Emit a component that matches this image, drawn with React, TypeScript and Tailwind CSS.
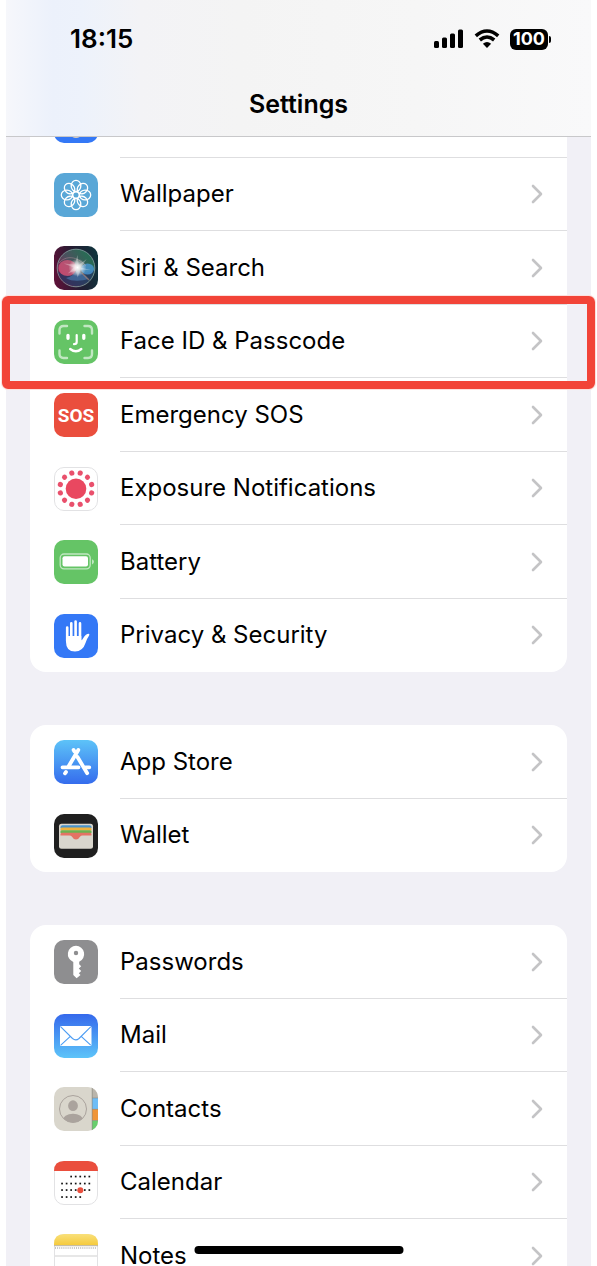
import type { ReactNode } from "react";

interface IRow {
  label: string;
  icon: ReactNode;
  highlighted?: boolean;
}

function Tile({ fill, outlined, children }: { fill: string; outlined?: boolean; children?: ReactNode }) {
  return (
    <svg viewBox="0 0 44 44" className="size-11 shrink-0" aria-hidden="true">
      <rect width="44" height="44" rx="10" fill={fill} />
      {outlined && (
        <rect x="0.5" y="0.5" width="43" height="43" rx="9.5" fill="none" stroke="#e2e2e4" />
      )}
      {children}
    </svg>
  );
}

function WallpaperIcon() {
  return (
    <Tile fill="#59a7d7">
      <g fill="none" stroke="#fff" strokeWidth="1.3">
        {[0, 45, 90, 135, 180, 225, 270, 315].map((angle) => (
          <ellipse key={angle} cx="22" cy="12.9" rx="4.8" ry="5.6" transform={`rotate(${angle} 22 22)`} />
        ))}
        <circle cx="22" cy="22" r="3.2" />
      </g>
    </Tile>
  );
}

function SiriIcon() {
  return (
    <Tile fill="url(#siri-bg)">
      <defs>
        <linearGradient id="siri-bg" x1="0" y1="0.6" x2="1" y2="0.4">
          <stop offset="0" stopColor="#5c1238" />
          <stop offset="0.5" stopColor="#231c32" />
          <stop offset="1" stopColor="#10333c" />
        </linearGradient>
        <linearGradient id="siri-orb" x1="0.1" y1="0.7" x2="0.8" y2="0.2">
          <stop offset="0" stopColor="#7d2350" />
          <stop offset="0.45" stopColor="#4d4f5e" />
          <stop offset="1" stopColor="#2a6a55" />
        </linearGradient>
        <radialGradient id="siri-glow">
          <stop offset="0" stopColor="#fff" />
          <stop offset="0.3" stopColor="#fff" stopOpacity="0.8" />
          <stop offset="1" stopColor="#fff" stopOpacity="0" />
        </radialGradient>
      </defs>
      <circle cx="22" cy="22" r="18.8" fill="url(#siri-orb)" stroke="#86a3a2" strokeOpacity="0.8" />
      <path d="M4 25c6 7 18 5 36-1-1 9-8 16-18 16S5 33 4 25Z" fill="#1f3560" opacity="0.75" />
      <ellipse cx="13.500" cy="22" rx="9" ry="8" fill="#e0587c" opacity="0.7" />
      <ellipse cx="33.500" cy="23" rx="6.500" ry="5.500" fill="#4c9ddd" opacity="0.75" />
      <path d="M23 24c4 3 8 5 11 9-6 2-16 3-22-1 5-1 8-4 11-8Z" fill="#4d80b8" opacity="0.6" />
      <path d="M28 27l7 7" stroke="#b98a74" strokeOpacity="0.6" strokeWidth="1.5" />
      <path d="M5 17c7-8 18-7 27 3" fill="none" stroke="#c99aa4" strokeOpacity="0.4" />
      <path d="M23.500 9l1.200 10 8-6-6 8.500 10 2.500-10-.5-3 8-2-7-8 3 6-6-10-4 11 1Z" fill="#fff" opacity="0.3" />
      <circle cx="23.500" cy="21.500" r="9" fill="url(#siri-glow)" />
    </Tile>
  );
}

function FaceIdIcon() {
  return (
    <Tile fill="#65c466">
      <g fill="none" stroke="#fff" strokeLinecap="round">
        <path
          d="M5.5 13.5V10Q5.500 6 9.500 6H13M30.500 6H34Q38 6 38 10V13.500M38 30.500V34Q38 38 34 38H30.500M13 38H9.500Q5.500 38 5.500 34V30.500"
          strokeWidth="2.4"
          opacity="0.6"
        />
        <path d="M14 15.300V18.300M29.800 15.300V18.300" strokeWidth="3.3" />
        <path d="M22.700 15V22Q22.700 24.200 20 24.200" strokeWidth="2.2" />
        <path d="M16.200 29Q22 33.500 27.300 29" strokeWidth="2.4" />
      </g>
    </Tile>
  );
}

function SosIcon() {
  return (
    <Tile fill="#ea4e3d">
      <text
        x="22"
        y="29"
        textAnchor="middle"
        fill="#fff"
        className="font-['Roboto',sans-serif] text-[19px] font-bold"
      >
        SOS
      </text>
    </Tile>
  );
}

function ExposureIcon() {
  return (
    <Tile fill="#fff" outlined>
      <g fill="#e9506c">
        <circle cx="22" cy="21.700" r="10.300" fill="#e94860" />
        {Array.from({ length: 12 }, (_, i) => (
          <circle key={i} cx="22" cy="5.500" r="2.600" transform={`rotate(${i * 30 + 15} 22 21.700)`} />
        ))}
      </g>
    </Tile>
  );
}

function BatteryIcon() {
  return (
    <Tile fill="#65c466">
      <rect x="6.200" y="14" width="30" height="14.800" rx="3.800" fill="none" stroke="#fff" strokeWidth="1.300" opacity="0.6" />
      <rect x="8.500" y="16.300" width="25.500" height="10.300" rx="2" fill="#fff" />
      <path d="M38 19.200Q40 20 40 21.800T38 24.400Z" fill="#fff" opacity="0.6" />
    </Tile>
  );
}

function PrivacyIcon() {
  return (
    <Tile fill="#3478f6">
      <path d="M13.200 13.500V27M17.300 9.200V26M21.600 7.500V26M26 9.400V26" stroke="#fff" strokeWidth="2.600" strokeLinecap="round" />
      <path
        d="M12 22H27.300V26.200Q28.200 26.200 29 24.500Q31.500 19.800 34.800 19.800Q36 20.300 35 21.800Q33 24.500 31.500 29Q28.800 37.500 21 37.500Q12 37.500 12 28Z"
        fill="#fff"
      />
    </Tile>
  );
}

function AppStoreIcon() {
  return (
    <Tile fill="url(#store-bg)">
      <defs>
        <linearGradient id="store-bg" x1="0" y1="0" x2="0" y2="1">
          <stop offset="0" stopColor="#5dc3f8" />
          <stop offset="1" stopColor="#356ced" />
        </linearGradient>
      </defs>
      <g stroke="#fff" strokeWidth="3.800" strokeLinecap="round">
        <path d="M24.300 10L14.200 27M8.500 27.300H24.500M31.500 27.300H35.300M12 32L11 33.300" />
        <path d="M19.600 10L20.500 11.500M23.500 17L33.200 33.200" />
      </g>
    </Tile>
  );
}

function WalletIcon() {
  return (
    <Tile fill="#1f1f1f">
      <rect x="5" y="9.700" width="34" height="25" rx="2.500" fill="#d9d6cd" />
      <path d="M6.500 14V13Q6.500 11.200 8.500 11.200H35.500Q37.500 11.200 37.500 13V14Z" fill="#4a93c9" />
      <path d="M6.500 16.500V15Q6.500 13.600 8.500 13.600H35.500Q37.500 13.600 37.500 15V16.500Z" fill="#f0b13c" />
      <path d="M6.500 19V17.500Q6.500 16.200 8.500 16.200H35.500Q37.500 16.200 37.500 17.500V19Z" fill="#6cb250" />
      <path
        d="M6.500 21.500V20Q6.500 18.700 8.500 18.700H35.500Q37.500 18.700 37.500 20V21.500H28.500Q27 21.500 26.200 22.600Q24.800 25.400 22 25.400T17.800 22.600Q17 21.500 15.500 21.500Z"
        fill="#e47364"
      />
    </Tile>
  );
}

function PasswordsIcon() {
  return (
    <Tile fill="#8e8e90">
      <path
        fillRule="evenodd"
        d="M22 5.800A8.300 8.300 0 0 1 25.200 21.700V24.200L27.200 26.200L24.800 28.500L27.200 31L24.800 33.200L26.500 35L22.600 38.200L19.300 35V21.900A8.300 8.300 0 0 1 22 5.800ZM22 10.800A2.200 2.200 0 1 0 22 15.200A2.200 2.200 0 1 0 22 10.800Z"
        fill="#fff"
      />
    </Tile>
  );
}

function MailIcon() {
  return (
    <Tile fill="url(#mail-bg)">
      <defs>
        <linearGradient id="mail-bg" x1="0" y1="0" x2="0" y2="1">
          <stop offset="0" stopColor="#3569ec" />
          <stop offset="1" stopColor="#5dc4f9" />
        </linearGradient>
      </defs>
      <rect x="6" y="12" width="31.500" height="20" rx="1.500" fill="#fff" />
      <path
        d="M6.800 12.800L18.500 24.500Q21.800 27.200 25 24.500L36.700 12.800M6.800 31.200L16.300 22.300M36.700 31.200L27.200 22.300"
        fill="none"
        stroke="#4b9cf3"
        strokeWidth="1.100"
      />
    </Tile>
  );
}

function ContactsIcon() {
  return (
    <Tile fill="#d9d6cc">
      <defs>
        <clipPath id="contacts-tile">
          <rect width="44" height="44" rx="10" />
        </clipPath>
        <clipPath id="contacts-avatar">
          <circle cx="19" cy="22" r="13.500" />
        </clipPath>
      </defs>
      <g clipPath="url(#contacts-tile)">
        <rect x="38" width="6" height="11" fill="#bab5ab" />
        <rect x="38" y="11" width="6" height="11" fill="#6ebdf6" />
        <rect x="38" y="22" width="6" height="11.500" fill="#ef9538" />
        <rect x="38" y="33.500" width="6" height="11" fill="#68ce6d" />
        <path d="M38.200 0V44" stroke="#8d8a83" strokeWidth="0.700" />
        <path d="M38 11H44M38 22.300H44M38 33.500H44" stroke="#8d8a83" strokeWidth="0.600" />
      </g>
      <g clipPath="url(#contacts-avatar)" fill="#aaa39d">
        <ellipse cx="19" cy="18.700" rx="4.900" ry="5.400" />
        <ellipse cx="19" cy="34" rx="10.500" ry="7.300" />
      </g>
      <circle cx="19" cy="22" r="13.500" fill="none" stroke="#aaa39d" />
    </Tile>
  );
}

const calendarWeeks = [
  { y: 15.5, from: 2, to: 6 },
  { y: 22.5, from: 0, to: 6 },
  { y: 29, from: 0, to: 6 },
  { y: 36, from: 0, to: 4 },
];

function CalendarIcon() {
  return (
    <Tile fill="#fff" outlined>
      {calendarWeeks.map((week) =>
        Array.from({ length: week.to - week.from + 1 }, (_, i) => (
          <rect key={`${week.y}-${i}`} x={7.2 + (week.from + i) * 4.55} y={week.y - 0.8} width="1.700" height="1.700" fill="#111" />
        )),
      )}
      <circle cx="26.300" cy="29.200" r="3" fill="#ea4e3d" />
      <path d="M0 10Q0 0 10 0H34Q44 0 44 10Z" fill="#ea4e3d" />
    </Tile>
  );
}

function NotesIcon() {
  return (
    <Tile fill="#fff" outlined>
      <defs>
        <linearGradient id="notes-top" x1="0" y1="0" x2="0" y2="1">
          <stop offset="0" stopColor="#f9e07a" />
          <stop offset="1" stopColor="#f5ca3c" />
        </linearGradient>
      </defs>
      <path d="M0 11.200V10Q0 0 10 0H34Q44 0 44 10V11.200Z" fill="url(#notes-top)" />
      <path d="M0 11.700H44" stroke="#b9b09a" />
      <path d="M1 14H43" stroke="#b4b4b4" strokeWidth="1.300" strokeDasharray="1 1.100" />
      <path d="M1 22H43" stroke="#cfcfcf" />
    </Tile>
  );
}

const groups: IRow[][] = [
  [
    { label: "Wallpaper", icon: <WallpaperIcon /> },
    { label: "Siri & Search", icon: <SiriIcon /> },
    { label: "Face ID & Passcode", icon: <FaceIdIcon />, highlighted: true },
    { label: "Emergency SOS", icon: <SosIcon /> },
    { label: "Exposure Notifications", icon: <ExposureIcon /> },
    { label: "Battery", icon: <BatteryIcon /> },
    { label: "Privacy & Security", icon: <PrivacyIcon /> },
  ],
  [
    { label: "App Store", icon: <AppStoreIcon /> },
    { label: "Wallet", icon: <WalletIcon /> },
  ],
  [
    { label: "Passwords", icon: <PasswordsIcon /> },
    { label: "Mail", icon: <MailIcon /> },
    { label: "Contacts", icon: <ContactsIcon /> },
    { label: "Calendar", icon: <CalendarIcon /> },
    { label: "Notes", icon: <NotesIcon /> },
  ],
];

function SettingsRow({ row }: { row: IRow }) {
  return (
    <li className="group relative h-[74px] even:h-[73px]">
      <a href="#" className="flex h-full items-center gap-[22px] pl-6">
        {row.icon}
        <span className="flex h-full min-w-0 flex-1 items-center justify-between border-b border-[#dedee0] pr-6 group-last:border-transparent">
          <span className="text-2xl leading-8">{row.label}</span>
          <svg viewBox="0 0 12 20" className="h-5 w-3 shrink-0" aria-hidden="true">
            <path d="M2 2L10 10L2 18" fill="none" stroke="#c4c4c6" strokeWidth="2.600" strokeLinecap="round" strokeLinejoin="round" />
          </svg>
        </span>
      </a>
      {row.highlighted && (
        <div className="pointer-events-none absolute -inset-x-7 -top-[9px] -bottom-[11px] z-10 rounded-md border-8 border-[#f24438] ring-1 ring-[#fde0de]" />
      )}
    </li>
  );
}

function StatusBar() {
  return (
    <div className="flex h-[78px] items-center justify-between pr-10 pl-16">
      <time className="text-[26px] leading-8 font-semibold">18:15</time>
      <div className="flex items-center">
        <svg viewBox="0 0 30 20" className="mr-[10px] h-5 w-[30px]" aria-hidden="true">
          <rect x="0" y="12" width="5" height="7" rx="1.500" />
          <rect x="8" y="8.500" width="5" height="10.500" rx="1.500" />
          <rect x="16" y="4.500" width="5" height="14.500" rx="1.500" />
          <rect x="24" y="0.500" width="5" height="18.500" rx="1.500" />
        </svg>
        <svg viewBox="0 0 26 20" className="mr-[10px] h-5 w-[26px]" aria-hidden="true">
          <path d="M1.800 6.800Q13-2.800 24.200 6.800" fill="none" stroke="#000" strokeWidth="3.600" />
          <path d="M5.800 11Q13 5 20.200 11" fill="none" stroke="#000" strokeWidth="3.600" />
          <path d="M8.900 14.800Q13 11.200 17.100 14.800L13 19Z" />
        </svg>
        <span className="flex h-[21px] w-[38px] items-center justify-center rounded-md bg-black text-[18px] leading-5 font-bold text-white">
          100
        </span>
        <span className="ml-px h-[7px] w-[2px] rounded-r-full bg-black" />
      </div>
    </div>
  );
}

export default function App() {
  return (
    <div className="relative flex h-screen flex-col overflow-hidden bg-white font-['Inter',sans-serif] text-black">
      <header className="mx-[6px] border-b border-[#c8c8ca] bg-[linear-gradient(90deg,#f6f7fb_0%,#ecf1fb_8%,#edf2fb_13%,#f3f3f6_23%,#f4f4f4_40%,#f6f6f6_70%,#f9f9fa_100%)]">
        <StatusBar />
        <h1 className="mb-[6px] text-center text-[25px] leading-[52px] font-semibold">Settings</h1>
      </header>

      <main className="mx-[6px] flex min-h-0 flex-1 flex-col gap-[53px] bg-[#f1f0f6] px-6">
        {groups.map((rows, index) => (
          <ul
            key={rows[0].label}
            className={index === 0 ? "shrink-0 rounded-b-2xl bg-white" : "shrink-0 rounded-2xl bg-white"}
          >
            {index === 0 && (
              <li className="flex h-[21px] gap-[22px] pl-6" aria-hidden="true">
                <span className="h-[6px] w-11 overflow-hidden">
                  <span className="-mt-[38px] block">
                    <Tile fill="#3478f6">
                      <circle cx="22" cy="32" r="7" fill="#d8cfc0" />
                    </Tile>
                  </span>
                </span>
                <span className="flex-1 border-b border-[#dedee0]" />
              </li>
            )}
            {rows.map((row) => (
              <SettingsRow key={row.label} row={row} />
            ))}
          </ul>
        ))}
      </main>

      <div className="absolute bottom-3 left-1/2 h-2 w-[209px] -translate-x-1/2 rounded-full bg-black" />
    </div>
  );
}
